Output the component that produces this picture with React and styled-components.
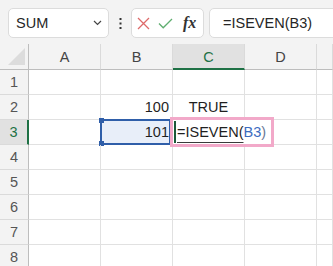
import React from "react";
import styled, { createGlobalStyle, css } from "styled-components";

const GlobalStyle = createGlobalStyle`
  html, body { margin: 0; padding: 0; background: #ffffff; }
  body { font-family: "Liberation Sans", Arial, sans-serif; overflow: hidden; }
  * { box-sizing: border-box; }
`;

const Page = styled.div`
  width: 333px;
  height: 266px;
  overflow: hidden;
  background: #ffffff;
`;

const Toolbar = styled.div`
  height: 44px;
  background: #f3f3f3;
  display: flex;
  align-items: flex-start;
  padding: 8px 0 0 8px;
`;

const Box = styled.div`
  height: 30px;
  background: #ffffff;
  border: 1px solid #dcdcdc;
  border-radius: 5px;
  display: flex;
  align-items: center;
`;

const NameBox = styled(Box)`
  width: 101px;
  padding: 0 6px 0 7px;
  justify-content: space-between;
  font-size: 14.5px;
  color: #262626;
`;

const Dots = styled.div`
  width: 22px;
  height: 30px;
  display: flex;
  align-items: center;
  justify-content: center;
`;

const ButtonsBox = styled(Box)`
  width: 73px;
  padding: 0 0 0 5px;
  gap: 8px;
`;

const Fx = styled.span`
  font-family: "Liberation Serif", "Times New Roman", serif;
  font-style: italic;
  font-weight: bold;
  font-size: 16px;
  color: #333;
  margin-left: 2px;
`;

const FormulaBar = styled(Box)`
  flex: 1;
  margin-left: 5px;
  margin-right: -12px;
  padding-left: 13px;
  font-size: 14.5px;
  color: #262626;
`;

const Sheet = styled.div`
  display: grid;
  grid-template-columns: 29px 72px 72px 72px 72px 1fr;
  grid-template-rows: 26px;
  grid-auto-rows: 25px;
`;

const Corner = styled.div`
  background: #f3f3f3;
  border-right: 1px solid #bdbdbd;
  border-bottom: 1px solid #bdbdbd;
  position: relative;
`;

const ColHeader = styled.div`
  background: ${(p) => (p.$active ? "#e1e1e1" : "#f3f3f3")};
  border-right: 1px solid #dadada;
  border-bottom: ${(p) => (p.$active ? "2px solid #1e7145" : "1px solid #bdbdbd")};
  color: ${(p) => (p.$active ? "#1e7145" : "#444444")};
  font-size: 14.5px;
  display: flex;
  align-items: center;
  justify-content: center;
  padding-top: ${(p) => (p.$active ? "1px" : "0")};
`;

const RowHeader = styled.div`
  background: ${(p) => (p.$active ? "#e1e1e1" : "#f3f3f3")};
  border-right: ${(p) => (p.$active ? "2px solid #1e7145" : "1px solid #bdbdbd")};
  border-bottom: 1px solid #dadada;
  color: ${(p) => (p.$active ? "#1e7145" : "#555555")};
  font-size: 14.5px;
  display: flex;
  align-items: center;
  justify-content: center;
`;

const Cell = styled.div`
  position: relative;
  border-right: 1px solid #e1e1e1;
  border-bottom: 1px solid #e1e1e1;
  font-size: 14.5px;
  color: #1f1f1f;
  display: flex;
  align-items: center;
  padding: 0 3px;
  justify-content: ${(p) =>
    p.$align === "right" ? "flex-end" : p.$align === "center" ? "center" : "flex-start"};
  ${(p) =>
    p.$ref &&
    css`
      background: #e8eef9;
    `}
`;

const RefBorder = styled.div`
  position: absolute;
  left: -1px;
  top: -1px;
  width: 71px;
  height: 26px;
  border: 2px solid #2f5ea9;
  pointer-events: none;
`;

const Handle = styled.div`
  position: absolute;
  width: 5px;
  height: 5px;
  background: #2f5ea9;
  left: -3px;
  ${(p) => (p.$bottom ? "bottom: -3px;" : "top: -3px;")}
`;

const Editor = styled.div`
  position: absolute;
  left: -3px;
  top: -3px;
  width: 104px;
  height: 30px;
  border: 3px solid #f2a9c9;
  background: #ffffff;
  z-index: 2;
  display: flex;
  align-items: center;
  padding-left: 1px;
  font-size: 14.5px;
  color: #1f1f1f;
`;

const Caret = styled.span`
  width: 2px;
  height: 22px;
  background: #1d5a3a;
  margin-right: 1px;
`;

const Underlined = styled.span`
  text-decoration: underline;
  text-decoration-color: #3a3a3a;
  text-underline-offset: 5px;
`;

const Paren = styled.span`
  color: #6b7a96;
`;

const RefText = styled.span`
  color: #3b6cbf;
`;

const XIcon = () => (
  <svg width="13" height="13" viewBox="0 0 13 13">
    <path d="M1 1 L12 12 M12 1 L1 12" stroke="#de6a6a" strokeWidth="1.3" fill="none" />
  </svg>
);

const CheckIcon = () => (
  <svg width="15" height="11" viewBox="0 0 15 11">
    <path d="M1 5.5 L5.2 9.8 L14 1" stroke="#5fae70" strokeWidth="1.3" fill="none" />
  </svg>
);

const Chevron = () => (
  <svg width="9" height="6" viewBox="0 0 9 6">
    <path d="M1 1 L4.5 4.5 L8 1" stroke="#444" strokeWidth="1.2" fill="none" />
  </svg>
);

const VDots = () => (
  <svg width="3" height="11" viewBox="0 0 3 11">
    <rect x="0.5" y="0" width="2" height="2" fill="#333" />
    <rect x="0.5" y="4.5" width="2" height="2" fill="#333" />
    <rect x="0.5" y="9" width="2" height="2" fill="#333" />
  </svg>
);

const Triangle = () => (
  <svg
    width="18"
    height="18"
    viewBox="0 0 18 18"
    style={{ position: "absolute", left: 8, top: 4 }}
  >
    <path d="M17 0 L17 17 L0 17 Z" fill="#dcdcdc" />
  </svg>
);

const cols = ["A", "B", "C", "D", ""];
const data = {
  2: { B: { v: "100", a: "right" }, C: { v: "TRUE", a: "center" } },
  3: { B: { v: "101", a: "right" } },
};

export default function App() {
  const rows = [1, 2, 3, 4, 5, 6, 7, 8];
  return (
    <Page>
      <GlobalStyle />
      <Toolbar>
        <NameBox>
          <span>SUM</span>
          <Chevron />
        </NameBox>
        <Dots>
          <VDots />
        </Dots>
        <ButtonsBox>
          <XIcon />
          <CheckIcon />
          <Fx>fx</Fx>
        </ButtonsBox>
        <FormulaBar>=ISEVEN(B3)</FormulaBar>
      </Toolbar>
      <Sheet>
        <Corner>
          <Triangle />
        </Corner>
        {cols.map((c, i) => (
          <ColHeader key={i} $active={c === "C"}>
            {c}
          </ColHeader>
        ))}
        {rows.map((r) => (
          <React.Fragment key={r}>
            <RowHeader $active={r === 3}>{r}</RowHeader>
            {cols.map((c, i) => {
              const d = data[r] && data[r][c];
              const isRef = r === 3 && c === "B";
              const isEdit = r === 3 && c === "C";
              return (
                <Cell key={i} $align={d ? d.a : "left"} $ref={isRef}>
                  {d ? d.v : null}
                  {isRef && (
                    <RefBorder>
                      <Handle />
                      <Handle $bottom />
                    </RefBorder>
                  )}
                  {isEdit && (
                    <Editor>
                      <Caret />
                      <Underlined>=ISEVEN(</Underlined>
                      <RefText>B3</RefText>
                      <Paren>)</Paren>
                    </Editor>
                  )}
                </Cell>
              );
            })}
          </React.Fragment>
        ))}
      </Sheet>
    </Page>
  );
}
